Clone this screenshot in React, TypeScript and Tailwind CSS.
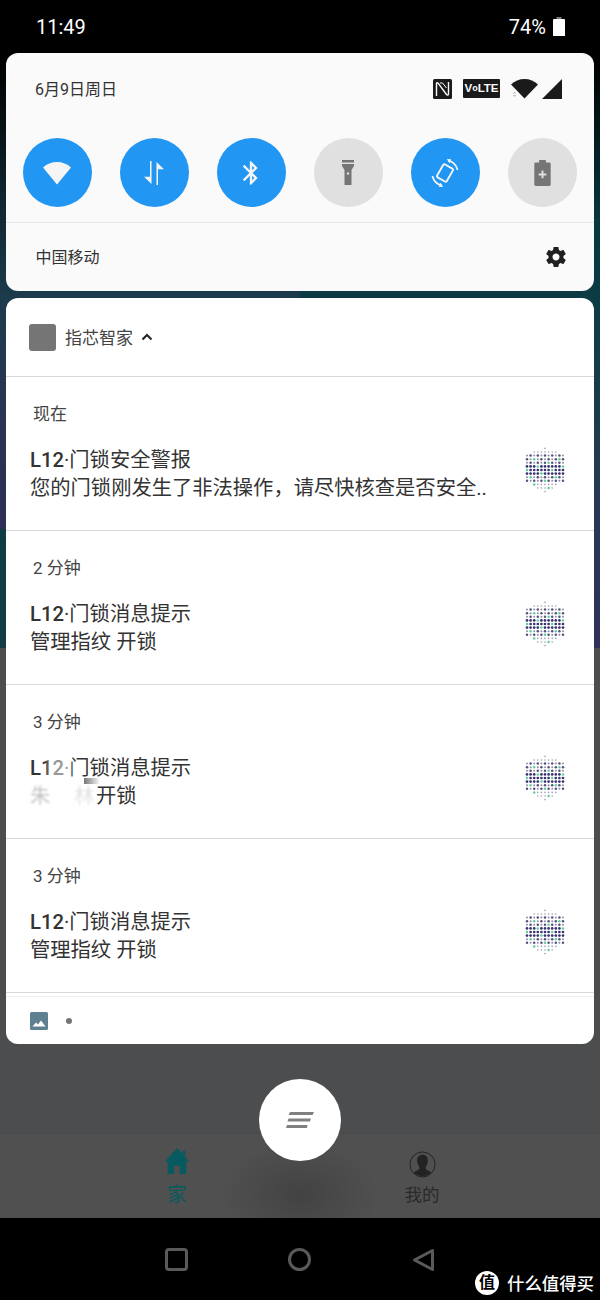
const font = { fontFamily: 'Roboto, "Noto Sans CJK SC", "Noto Sans", sans-serif' };

const GEAR =
  "M19.43 12.98c.04-.32.07-.64.07-.98s-.03-.66-.07-.98l2.11-1.65c.19-.15.24-.42.12-.64l-2-3.46c-.12-.22-.39-.3-.61-.22l-2.49 1c-.52-.4-1.08-.73-1.69-.98l-.38-2.65C14.46 2.18 14.25 2 14 2h-4c-.25 0-.46.18-.49.42l-.38 2.65c-.61.25-1.17.59-1.69.98l-2.49-1c-.23-.09-.49 0-.61.22l-2 3.46c-.13.22-.07.49.12.64l2.11 1.65c-.04.32-.07.65-.07.98s.03.66.07.98l-2.11 1.65c-.19.15-.24.42-.12.64l2 3.46c.12.22.39.3.61.22l2.49-1c.52.4 1.08.73 1.69.98l.38 2.65c.03.24.24.42.49.42h4c.25 0 .46-.18.49-.42l.38-2.65c.61-.25 1.17-.59 1.69-.98l2.49 1c.23.09.49 0 .61-.22l2-3.46c.12-.22.07-.49-.12-.64l-2.11-1.65zM12 15.5c-1.93 0-3.5-1.57-3.5-3.5s1.57-3.5 3.5-3.5 3.5 1.57 3.5 3.5-1.57 3.5-3.5 3.5z";
const BLUETOOTH =
  "M17.71 7.71L12 2h-1v7.59L6.41 5 5 6.41 10.59 12 5 17.59 6.41 19 11 14.41V22h1l5.71-5.71-4.3-4.29 4.3-4.29zM13 5.83l1.88 1.88L13 9.59V5.83zm1.88 10.46L13 18.17v-3.76l1.88 1.88z";

function Toggle({ on, children }: { on?: boolean; children: React.ReactNode }) {
  return (
    <div
      className={
        on
          ? "grid h-[69px] w-[69px] place-items-center rounded-full bg-[#2196f3]"
          : "grid h-[69px] w-[69px] place-items-center rounded-full bg-[#e0e0e0]"
      }
    >
      {children}
    </div>
  );
}

// the app's shield of coloured dots
function DotShield() {
  const step = 3.6;
  const dots: { x: number; y: number; c: string; r: number }[] = [];
  for (let col = -5; col <= 5; col++) {
    const a = Math.abs(col);
    const top = Math.ceil((-23 + a * 1.6) / step);
    const bottom = Math.floor((23 - a * 2.2) / step);
    for (let row = top; row <= bottom; row++) {
      const y = row * step;
      const mid = row >= -1 && row <= 1;
      const tip = row <= -5 || row >= 4;
      const green = (col + row * 3 + 40) % 7 === 0 && row > -4;
      const even = (col + row) % 2 === 0;
      dots.push({
        x: 22 + col * step,
        y: 24 + y,
        r: green ? 1.25 : mid ? 1.35 : tip ? 0.8 : even ? 1.25 : 1,
        c: green ? "#5fd096" : mid ? "#38336f" : tip ? "#a09eb8" : even ? "#57527f" : "#8f8dab",
      });
    }
  }
  return (
    <svg width="44" height="50" viewBox="0 0 44 50">
      {dots.map((d, i) => (
        <circle key={i} cx={d.x} cy={d.y} r={d.r} fill={d.c} />
      ))}
    </svg>
  );
}

function Row({
  time,
  title,
  body,
}: {
  time: string;
  title: string;
  body: React.ReactNode;
}) {
  return (
    <div className="relative h-[154px] border-b border-[#d8d8d8]">
      <div className="pl-[27px] pt-[25px] text-[17px] leading-[24px] text-[#444]">{time}</div>
      <div className="pl-[24px] pt-[20px] text-[20.300px] leading-[28px] text-[#333]">
        <div>
          <span className="font-medium">L12</span>·{title}
        </div>
        <div>{body}</div>
      </div>
      <div className="absolute right-[27px] top-[69px]">
        <DotShield />
      </div>
    </div>
  );
}

export default function App() {
  return (
    <div className="relative flex h-[1300px] w-[600px] flex-col overflow-hidden bg-[#4c4d4f]" style={font}>
      {/* wallpaper seen in the gutters beside the shade */}
      <div className="absolute inset-x-0 top-0 flex h-[648px]">
        <div className="h-full w-1/2 bg-[linear-gradient(180deg,#000_60px,#0f2630_200px,#1c3b4c_300px,#2b3453_420px,#2e2f56_528px,#0f3c42_530px,#133c44_648px)]" />
        <div className="h-full w-1/2 bg-[linear-gradient(180deg,#000_60px,#06383d_220px,#0e3c45_320px,#263a52_480px,#30305a_648px)]" />
      </div>

      {/* status bar */}
      <div className="relative flex h-[53px] shrink-0 items-center justify-between bg-black pl-[36px] pr-[35px] text-white">
        <span className="text-[20px]">11:49</span>
        <div className="flex items-center gap-[7px]">
          <span className="text-[20px]">74%</span>
          <svg width="12" height="19" viewBox="0 0 12 19">
            <path d="M3.500 0h5v2h-5z" fill="#777" />
            <path d="M0 3a1 1 0 0 1 1-1h10a1 1 0 0 1 1 1v16H0z" fill="#fff" />
          </svg>
        </div>
      </div>

      <div className="relative flex flex-col gap-[7px] px-[6px]">
        {/* quick settings */}
        <div className="h-[238px] rounded-[12px] bg-[#fafafa]">
          <div className="flex h-[71px] items-center justify-between pl-[29px] pr-[32px]">
            <span className="pt-[3px] text-[16px] text-[#333]">6月9日周日</span>
            <div className="flex items-center">
              <svg width="19" height="20" viewBox="0 0 19 20">
                <rect width="19" height="20" rx="1.500" fill="#1a1a1a" />
                <path d="M3.500 17V4.500c0-1 1-1 1.600-.3L13.500 15.500c.6.700 2 .7 2-.5V3" fill="none" stroke="#fafafa" strokeWidth="1.400" />
                <path d="M7 4h2.500l4 5" fill="none" stroke="#fafafa" strokeWidth="1" />
              </svg>
              <div
                className="ml-[11px] flex h-[19px] w-[37px] items-center justify-center rounded-[1px] bg-[#1a1a1a] text-[11.500px] font-bold leading-none text-[#fafafa]"
                style={{ fontFamily: '"Liberation Sans", sans-serif' }}
              >
                V<span className="text-[9px]">o</span>LTE
              </div>
              <svg className="ml-[11px]" width="27" height="22" viewBox="0 0 27 22">
                <path d="M0 6.500C3.500 3 8.500 1 13.500 1s10 2 13.500 5.500L13.500 20.500z" fill="#1a1a1a" />
                <path d="M2 15.500l1.500-2 1.500 2zM2 17l1.500 2 1.500-2z" fill="#bbb" />
              </svg>
              <svg className="ml-[4px]" width="20" height="20" viewBox="0 0 20 20">
                <path d="M20 0v20H0z" fill="#1a1a1a" />
              </svg>
            </div>
          </div>

          <div className="flex justify-between pl-[16.500px] pr-[17.500px] pt-[14px]">
            <Toggle on>
              <svg width="30" height="26" viewBox="0 0 30 26">
                <path d="M1 7.500C4.800 3.900 9.700 2 15 2s10.200 1.900 14 5.500L15 24.500z" fill="#f5f5f5" />
              </svg>
            </Toggle>
            <Toggle on>
              <svg width="24" height="26" viewBox="0 0 24 26">
                <path d="M9.500 1v23L2 16.800h6V1zM14.500 25V2L22 9.200h-6V25z" fill="#f5f5f5" />
              </svg>
            </Toggle>
            <Toggle on>
              <svg width="28" height="28" viewBox="0 0 24 24">
                <path d={BLUETOOTH} fill="#f5f5f5" />
              </svg>
            </Toggle>
            <Toggle>
              <svg width="12" height="25" viewBox="0 0 12 25">
                <path d="M0 0h12v2.500H0zM0 4h12v2L9.500 10v15h-7V10L0 6z" fill="#757575" />
                <circle cx="6" cy="13.500" r="1.200" fill="#e0e0e0" />
              </svg>
            </Toggle>
            <Toggle on>
              <svg width="28" height="28" viewBox="0 0 30 30" fill="none" stroke="#f5f5f5">
                <rect x="9" y="7" width="12" height="16" rx="1.500" strokeWidth="2" transform="rotate(30 15 15)" />
                <path d="M19 1.800a13.800 13.800 0 0 1 9.500 10" strokeWidth="1.800" />
                <path d="M17.500 0.200l3.500 0-1.300 3.800z" fill="#f5f5f5" strokeWidth="0.800" />
                <path d="M11 28.200a13.800 13.800 0 0 1-9.500-10" strokeWidth="1.800" />
                <path d="M12.500 29.800l-3.500 0 1.300-3.800z" fill="#f5f5f5" strokeWidth="0.800" />
              </svg>
            </Toggle>
            <Toggle>
              <svg width="17" height="26" viewBox="0 0 17 27">
                <path d="M5 0h7v2.500h3.500a1.500 1.500 0 0 1 1.500 1.500v21.500a1.500 1.500 0 0 1-1.500 1.500h-14A1.500 1.500 0 0 1 0 25.500V4a1.500 1.500 0 0 1 1.500-1.500H5z" fill="#757575" />
                <path d="M7.500 11h2v3h3v2h-3v3h-2v-3h-3v-2h3z" fill="#e0e0e0" />
              </svg>
            </Toggle>
          </div>

          <div className="mt-[15px] flex h-[69px] items-center justify-between border-t border-[#e6e6e6] pl-[29.500px] pr-[26px]">
            <span className="pt-[2px] text-[16px] text-[#333]">中国移动</span>
            <svg width="24" height="24" viewBox="0 0 24 24">
              <path d={GEAR} fill="#1f1f1f" />
            </svg>
          </div>
        </div>

        {/* notifications */}
        <div className="rounded-[12px] bg-white">
          <div className="flex h-[79px] items-center border-b border-[#d8d8d8] pl-[23px]">
            <div className="h-[27px] w-[27px] rounded-[3px] bg-[#757575]" />
            <span className="ml-[9px] pt-[4px] text-[17px] text-[#444]">指芯智家</span>
            <svg className="ml-[8px]" width="12" height="8" viewBox="0 0 12 8">
              <path d="M1.500 6.500L6 2l4.500 4.500" fill="none" stroke="#222" strokeWidth="2" />
            </svg>
          </div>

          <Row time="现在" title="门锁安全警报" body="您的门锁刚发生了非法操作，请尽快核查是否安全.." />
          <Row time="2 分钟" title="门锁消息提示" body="管理指纹 开锁" />
          <div className="relative">
            <Row
              time="3 分钟"
              title="门锁消息提示"
              body={
                <span className="flex">
                  <span className="w-[22px] text-[#333]/30 blur-[1px]">朱</span>
                  <span className="w-[22px] opacity-0">林</span>
                  <span className="w-[22px] text-[#333]/15 blur-[1px]">林</span>
                  <span>开锁</span>
                </span>
              }
            />
            {/* smudges left by the blurred-out name */}
            <div className="absolute left-[42px] top-[73px] h-[26px] w-[24px] bg-white/50 blur-[2px]" />
            <div className="absolute left-[78px] top-[93px] h-[6px] w-[16px] bg-gradient-to-r from-[#777] to-white" />
          </div>
          <Row time="3 分钟" title="门锁消息提示" body="管理指纹 开锁" />

          <div className="h-[3px]" />
          <div className="flex h-[48px] items-center border-t border-[#eee] pl-[24px]">
            <svg width="18" height="18" viewBox="0 0 18 18">
              <rect width="18" height="18" rx="1.500" fill="#5f8090" />
              <path d="M2.500 14.500l3.500-4 2 2 3-4 4.500 6z" fill="#fff" />
            </svg>
            <div className="ml-[18px] h-[6px] w-[6px] rounded-full bg-[#757575]" />
          </div>
        </div>
      </div>

      <div className="flex-1" />

      {/* app tab bar under the shade */}
      <div className="relative flex h-[85px] shrink-0 gap-[205px] border-t border-[#4a4a4b] bg-[#505050] pl-[157px] pt-[14px]">
        <div className="flex w-[40px] flex-col items-center">
          <svg width="26" height="26" viewBox="0 0 26 28">
            <path d="M13 0L0 14.500h3V28h7v-9h6v9h7V14.500h3l-4-4.500V3h-3v3.500z" fill="#075a5f" />
          </svg>
          <span className="mt-[8px] text-[20px] leading-[26px] text-[#075a5f]">家</span>
        </div>
        <div className="flex w-[40px] flex-col items-center">
          <svg className="mt-[3px]" width="27" height="27" viewBox="0 0 28 28">
            <circle cx="14" cy="14" r="13" fill="none" stroke="#222" strokeWidth="1" />
            <path d="M14 4c4 0 6 3 5.500 7-.3 3-2 5-2.500 7 1 2 4 2.500 6 4.500a13 13 0 0 1-18 0c2-2 5-2.500 6-4.500-.5-2-2.200-4-2.500-7C8 7 10 4 14 4z" fill="#222" />
          </svg>
          <span className="mt-[5px] whitespace-nowrap text-[17.500px] leading-[24px] text-[#2a2a2a]">我的</span>
        </div>
      </div>

      {/* system nav bar */}
      <div className="relative flex h-[82px] shrink-0 bg-black pl-[165px] pt-[30px]">
        <div className="h-[23px] w-[23px] rounded-[4px] border-[3px] border-[#5a5a5a]" />
        <div className="ml-[100px] h-[23px] w-[23px] rounded-full border-[3px] border-[#5a5a5a]" />
        <svg className="ml-[101px]" width="23" height="24" viewBox="0 0 23 24">
          <path d="M20.500 2.500v19L2.500 12z" fill="none" stroke="#5a5a5a" strokeWidth="3" strokeLinejoin="round" />
        </svg>
      </div>

      {/* floating button and its shadow */}
      <div className="absolute left-[220px] top-[1140px] h-[78px] w-[160px] bg-[radial-gradient(ellipse_at_center_70%,rgba(50,50,50,0.45),rgba(80,80,80,0)_70%)]" />
      <div className="absolute left-[259px] top-[1079px] grid h-[82px] w-[82px] place-items-center rounded-full bg-white">
        <svg width="28" height="16" viewBox="0 0 28 16">
          <path d="M4 0h24l-1.500 3H2.500zM2.500 6.500H25l-1 3H1.500zM1 13h20.500l-.5 3H0z" fill="#808080" />
        </svg>
      </div>

      {/* watermark */}
      <div className="absolute left-[475px] top-[1270px] flex items-center">
        <div className="grid h-[24px] w-[24px] place-items-center rounded-full bg-white text-[16px] font-bold leading-none text-black">
          值
        </div>
        <span className="ml-[8px] whitespace-nowrap pt-[2px] text-[17.400px] font-medium leading-[24px] text-white">什么值得买</span>
      </div>
    </div>
  );
}
